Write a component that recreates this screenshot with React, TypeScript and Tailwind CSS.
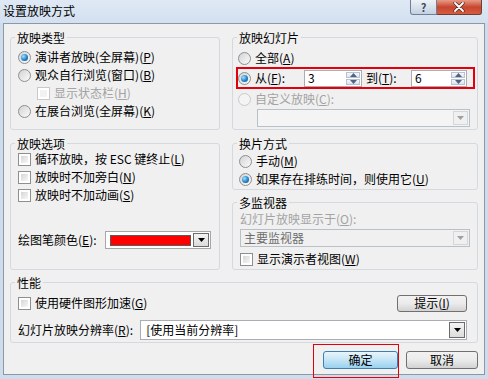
import React from 'react';

const cjk = "font-['Noto_Sans_CJK_SC','Noto_Sans',sans-serif]";

function K({ k }: { k: string }) {
  return (
    <span>
      (<span className="underline underline-offset-1">{k}</span>)
    </span>
  );
}

function Radio({ checked, disabled }: { checked?: boolean; disabled?: boolean }) {
  return (
    <div
      className={`w-[13px] h-[13px] shrink-0 rounded-full border flex items-center justify-center ${
        disabled
          ? 'border-[#c9c9c9] bg-[#f4f4f4]'
          : 'border-[#8c8e90] bg-linear-to-br from-[#d3d3d3] to-[#fbfbfb]'
      }`}
    >
      {checked && (
        <div className="w-[7px] h-[7px] rounded-full bg-radial-[at_35%_35%] from-[#a4e0ff] via-[#2b8bd0] to-[#0a3f6e]" />
      )}
    </div>
  );
}

function Check({ disabled }: { disabled?: boolean }) {
  return (
    <div
      className={`w-[13px] h-[13px] shrink-0 border p-[2px] bg-white ${
        disabled ? 'border-[#c9c9c9]' : 'border-[#8e8f8f]'
      }`}
    >
      <div
        className={`w-full h-full ${
          disabled ? 'bg-[#f2f2f2]' : 'bg-linear-to-br from-[#d6d6d6] to-[#f7f7f7]'
        }`}
      />
    </div>
  );
}

function Arrow({ color = '#000' }: { color?: string }) {
  return (
    <svg width="7" height="4" viewBox="0 0 7 4">
      <path d="M0 0 L7 0 L3.5 4Z" fill={color} />
    </svg>
  );
}

function Spin() {
  return (
    <div className="w-[16px] h-full flex flex-col gap-[1px] p-[1px]">
      <div className="flex-1 flex items-center justify-center border border-[#b9c3ce] bg-linear-to-b from-[#f6f8fb] to-[#dde4ec]">
        <svg width="7" height="4" viewBox="0 0 7 4">
          <path d="M0 4 L3.5 0 L7 4Z" fill="#4f6389" />
        </svg>
      </div>
      <div className="flex-1 flex items-center justify-center border border-[#b9c3ce] bg-linear-to-b from-[#f6f8fb] to-[#dde4ec]">
        <svg width="7" height="4" viewBox="0 0 7 4">
          <path d="M0 0 L7 0 L3.5 4Z" fill="#4f6389" />
        </svg>
      </div>
    </div>
  );
}

function Group({ title, className, children }: { title: string; className: string; children: React.ReactNode }) {
  return (
    <fieldset className={`border border-[#d3d9df] rounded-[3px] min-w-0 ${className}`}>
      <legend className="ml-[4px] px-[2px] text-[12px] leading-[13px] text-black">{title}</legend>
      {children}
    </fieldset>
  );
}

function Row({ children, className = '' }: { children: React.ReactNode; className?: string }) {
  return <div className={`flex items-center gap-[4px] h-[18px] text-[12px] ${className}`}>{children}</div>;
}

export default function App() {
  return (
    <div className={`w-[488px] h-[379px] bg-[#cfdcec] flex flex-col ${cjk}`}>
      {/* title bar */}
      <div className="h-[23px] flex items-start bg-linear-to-b from-[#dfe9f5] to-[#d3e0ef]">
        <div className="pl-[3px] pt-[3px] text-[12px] leading-[15px] text-black flex-1">设置放映方式</div>
        <div className="flex mr-[6px]">
          <div className="w-[27px] h-[15px] rounded-bl-[3px] border border-t-0 border-[#6f7f96] bg-linear-to-b from-[#eef2f7] to-[#c4d1e1] flex items-center justify-center text-[11px] leading-none font-bold text-[#3c4a5e]">
            ?
          </div>
          <div className="w-[45px] h-[15px] rounded-br-[3px] border border-t-0 border-l-0 border-[#6f3e37] bg-linear-to-b from-[#e69a88] via-[#c8452d] to-[#d55c3f] flex items-center justify-center">
            <svg width="12" height="10" viewBox="0 0 12 10">
              <path d="M2 1 L10 9 M10 1 L2 9" stroke="#4a2a25" strokeWidth="3.2" strokeLinecap="round" />
              <path d="M2 1 L10 9 M10 1 L2 9" stroke="#fff" strokeWidth="1.8" strokeLinecap="round" />
            </svg>
          </div>
        </div>
      </div>

      {/* client area */}
      <div className="mx-[3px] h-[352px] border border-[#8a98a8] bg-[#f0f0f0] pl-[6px] pr-[5px] pt-[7px] relative">
        {/* row 1 */}
        <div className="flex gap-[12px]">
          <Group title="放映类型" className="w-[210px] h-[99px]">
            <div className="pl-[7px] pt-[4px]">
              <Row>
                <Radio checked />
                <span>演讲者放映(全屏幕)<K k="P" /></span>
              </Row>
              <Row>
                <Radio />
                <span>观众自行浏览(窗口)<K k="B" /></span>
              </Row>
              <Row className="pl-[19px] text-[#a3a3a3]">
                <Check disabled />
                <span>显示状态栏<K k="H" /></span>
              </Row>
              <Row>
                <Radio />
                <span>在展台浏览(全屏幕)<K k="K" /></span>
              </Row>
            </div>
          </Group>

          <Group title="放映幻灯片" className="w-[246px] h-[99px]">
            <div className="pt-[5px]">
              <Row className="pl-[5px] h-[16px]">
                <Radio />
                <span>全部<K k="A" /></span>
              </Row>
              <div className="ml-[3px] w-[239px] h-[22px] border-2 border-[#e2000c] flex items-center">
                <Radio checked />
                <span className="ml-[4px] w-[49px] text-[12px]">
                  从<K k="F" />:
                </span>
                <div className="w-[58px] h-[17px] border border-[#abadb3] bg-white flex items-center">
                  <span className="flex-1 pl-[3px] text-[12px] leading-none">3</span>
                  <Spin />
                </div>
                <span className="ml-[4px] w-[45px] text-[12px]">
                  到<K k="T" />:
                </span>
                <div className="w-[56px] h-[17px] border border-[#abadb3] bg-white flex items-center">
                  <span className="flex-1 pl-[3px] text-[12px] leading-none">6</span>
                  <Spin />
                </div>
              </div>
              <Row className="pl-[5px] mt-[1px] text-[#a3a3a3]">
                <Radio disabled />
                <span>自定义放映<K k="C" />:</span>
              </Row>
              <div className="ml-[24px] mt-[1px] w-[213px] h-[18px] border border-[#b8c0c8] bg-[#f4f4f4] flex justify-end p-[1px]">
                <div className="w-[15px] h-full border border-[#d3d7db] bg-[#f0f0f0] flex items-center justify-center">
                  <Arrow color="#a0a0a0" />
                </div>
              </div>
            </div>
          </Group>
        </div>

        {/* row 2 */}
        <div className="flex gap-[12px] mt-[7px]">
          <Group title="放映选项" className="w-[210px] h-[133px]">
            <div className="pl-[7px]">
              <Row>
                <Check />
                <span>循环放映，按 ESC 键终止<K k="L" /></span>
              </Row>
              <Row>
                <Check />
                <span>放映时不加旁白<K k="N" /></span>
              </Row>
              <Row>
                <Check />
                <span>放映时不加动画<K k="S" /></span>
              </Row>
              <div className="flex items-center mt-[27px] text-[12px]">
                <span className="w-[87px]">
                  绘图笔颜色<K k="E" />:
                </span>
                <div className="w-[106px] h-[18px] border border-[#a7a7a7] bg-white flex items-center pl-[4px] pr-[1px] gap-[2px]">
                  <div className="w-[81px] h-[11px] bg-[#ff0000] border border-[#5a5a5a]" />
                  <div className="w-[16px] h-[14px] border border-[#6b6b6b] bg-linear-to-b from-[#f4f4f4] to-[#dcdcdc] flex items-center justify-center">
                    <Arrow />
                  </div>
                </div>
              </div>
            </div>
          </Group>

          <div className="w-[246px] flex flex-col gap-[6px]">
            <Group title="换片方式" className="w-[246px] h-[53px]">
              <div className="pl-[6px] pt-[2px]">
                <Row>
                  <Radio />
                  <span>手动<K k="M" /></span>
                </Row>
                <Row>
                  <Radio checked />
                  <span>如果存在排练时间，则使用它<K k="U" /></span>
                </Row>
              </div>
            </Group>
            <Group title="多监视器" className="w-[246px] h-[74px]">
              <div className="pl-[7px] pt-[2px]">
                <div className="h-[16px] flex items-center text-[12px] text-[#a3a3a3]">
                  幻灯片放映显示于<K k="O" />:
                </div>
                <div className="mt-[2px] w-[230px] h-[18px] border border-[#b8c0c8] bg-[#f0f0f0] flex items-center p-[1px]">
                  <span className="flex-1 pl-[2px] text-[12px] leading-none text-[#6d6d6d]">主要监视器</span>
                  <div className="w-[15px] h-full border border-[#d3d7db] flex items-center justify-center">
                    <Arrow color="#a0a0a0" />
                  </div>
                </div>
                <Row className="mt-[3px]">
                  <Check />
                  <span>显示演示者视图<K k="W" /></span>
                </Row>
              </div>
            </Group>
          </div>
        </div>

        {/* row 3 */}
        <Group title="性能" className="w-[468px] h-[67px] mt-[6px]">
          <div className="pl-[7px] pr-[10px] pt-[5px]">
            <div className="flex items-center justify-between h-[18px]">
              <Row>
                <Check />
                <span>使用硬件图形加速<K k="G" /></span>
              </Row>
              <button className="w-[70px] h-[17px] rounded-[3px] border border-[#707070] bg-linear-to-b from-[#f2f2f2] via-[#ebebeb] to-[#d2d2d2] text-[12px] leading-none text-black">
                提示<K k="I" />
              </button>
            </div>
            <div className="flex items-center mt-[8px] text-[12px]">
              <span className="w-[123px]">
                幻灯片放映分辨率<K k="R" />:
              </span>
              <div className="w-[329px] h-[20px] border border-[#abadb3] bg-white flex items-center p-[1px]">
                <span className="flex-1 pl-[4px] text-[12px] leading-none">[使用当前分辨率]</span>
                <div className="w-[16px] h-[16px] border border-[#6b6b6b] bg-linear-to-b from-[#f4f4f4] to-[#dcdcdc] flex items-center justify-center">
                  <Arrow />
                </div>
              </div>
            </div>
          </div>
        </Group>

        {/* buttons */}
        <div className="flex justify-end gap-[8px] mt-[8px] pr-[1px]">
          <button className="w-[75px] h-[18px] rounded-[3px] border border-[#3c7fb1] bg-linear-to-b from-[#e8f5fc] via-[#c4e5f6] to-[#98d1ef] text-[12px] leading-none text-black">
            确定
          </button>
          <button className="w-[72px] h-[18px] rounded-[3px] border border-[#707070] bg-linear-to-b from-[#f2f2f2] via-[#ebebeb] to-[#d2d2d2] text-[12px] leading-none text-black">
            取消
          </button>
        </div>

        {/* red annotation box */}
        <div className="absolute left-[309px] top-[320px] w-[86px] h-[34px] border border-[#e2000c]" />
      </div>
    </div>
  );
}
